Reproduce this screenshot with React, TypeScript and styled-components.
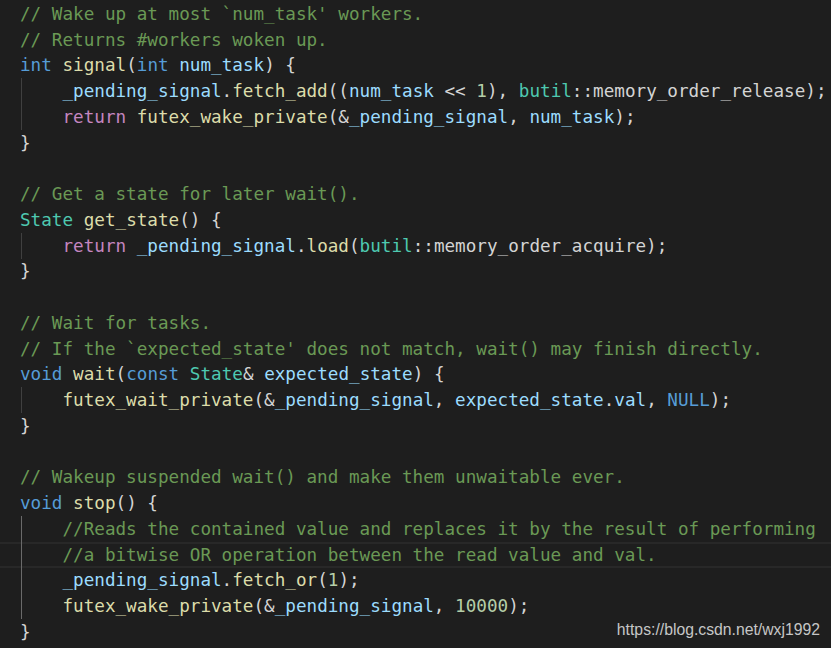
import React from "react";
import styled, { createGlobalStyle } from "styled-components";

const GlobalStyle = createGlobalStyle`
  html, body { margin: 0; padding: 0; background: #1e1e1e; }
`;

type Kind = "c" | "k" | "x" | "f" | "v" | "t" | "n" | "p";

const colors: Record<Kind, string> = {
  c: "#6a9955",
  k: "#569cd6",
  x: "#c586c0",
  f: "#dcdcaa",
  v: "#9cdcfe",
  t: "#4ec9b0",
  n: "#b5cea8",
  p: "#d4d4d4",
};

type Tok = [Kind, string];
type LineDef = { indent: 0 | 1; guide?: "normal" | "active"; current?: boolean; toks: Tok[] };

const lines: LineDef[] = [
  { indent: 0, toks: [["c", "// Wake up at most `num_task' workers."]] },
  { indent: 0, toks: [["c", "// Returns #workers woken up."]] },
  { indent: 0, toks: [["k", "int"], ["p", " "], ["f", "signal"], ["p", "("], ["k", "int"], ["p", " "], ["v", "num_task"], ["p", ") {"]] },
  { indent: 1, guide: "normal", toks: [["v", "_pending_signal"], ["p", "."], ["f", "fetch_add"], ["p", "(("], ["v", "num_task"], ["p", " << "], ["n", "1"], ["p", "), "], ["t", "butil"], ["p", "::memory_order_release);"]] },
  { indent: 1, guide: "normal", toks: [["x", "return"], ["p", " "], ["f", "futex_wake_private"], ["p", "(&"], ["v", "_pending_signal"], ["p", ", "], ["v", "num_task"], ["p", ");"]] },
  { indent: 0, toks: [["p", "}"]] },
  { indent: 0, toks: [] },
  { indent: 0, toks: [["c", "// Get a state for later wait()."]] },
  { indent: 0, toks: [["t", "State"], ["p", " "], ["f", "get_state"], ["p", "() {"]] },
  { indent: 1, guide: "normal", toks: [["x", "return"], ["p", " "], ["v", "_pending_signal"], ["p", "."], ["f", "load"], ["p", "("], ["t", "butil"], ["p", "::memory_order_acquire);"]] },
  { indent: 0, toks: [["p", "}"]] },
  { indent: 0, toks: [] },
  { indent: 0, toks: [["c", "// Wait for tasks."]] },
  { indent: 0, toks: [["c", "// If the `expected_state' does not match, wait() may finish directly."]] },
  { indent: 0, toks: [["k", "void"], ["p", " "], ["f", "wait"], ["p", "("], ["k", "const"], ["p", " "], ["t", "State"], ["p", "& "], ["v", "expected_state"], ["p", ") {"]] },
  { indent: 1, guide: "normal", toks: [["f", "futex_wait_private"], ["p", "(&"], ["v", "_pending_signal"], ["p", ", "], ["v", "expected_state"], ["p", "."], ["v", "val"], ["p", ", "], ["k", "NULL"], ["p", ");"]] },
  { indent: 0, toks: [["p", "}"]] },
  { indent: 0, toks: [] },
  { indent: 0, toks: [["c", "// Wakeup suspended wait() and make them unwaitable ever."]] },
  { indent: 0, toks: [["k", "void"], ["p", " "], ["f", "stop"], ["p", "() {"]] },
  { indent: 1, guide: "active", toks: [["c", "//Reads the contained value and replaces it by the result of performing"]] },
  { indent: 1, guide: "active", current: true, toks: [["c", "//a bitwise OR operation between the read value and val."]] },
  { indent: 1, guide: "active", toks: [["v", "_pending_signal"], ["p", "."], ["f", "fetch_or"], ["p", "("], ["n", "1"], ["p", ");"]] },
  { indent: 1, guide: "active", toks: [["f", "futex_wake_private"], ["p", "(&"], ["v", "_pending_signal"], ["p", ", "], ["n", "10000"], ["p", ");"]] },
  { indent: 0, toks: [["p", "}"]] },
];

const Editor = styled.div`
  position: relative;
  width: 831px;
  height: 648px;
  overflow: hidden;
  background: #1e1e1e;
  padding-top: 1px;
  box-sizing: border-box;
  font-family: "DejaVu Sans Mono", "Liberation Mono", monospace;
  font-size: 17.64px;
  color: #d4d4d4;
`;

const Line = styled.div<{ $current?: boolean }>`
  display: flex;
  align-items: center;
  height: 25.75px;
  padding-left: 20px;
  white-space: pre;
  box-shadow: ${(p) => (p.$current ? "inset 0 2px 0 #282828, inset 0 -2px 0 #282828" : "none")};
`;

const Indent = styled.span<{ $guide?: "normal" | "active" }>`
  display: inline-block;
  align-self: stretch;
  width: 4ch;
  flex: none;
  box-shadow: inset 1px 0 0
    ${(p) => (p.$guide === "active" ? "#6a6a6a" : "#404040")};
  margin-left: 1px;
  margin-right: -1px;
`;

const Token = styled.span<{ $kind: Kind }>`
  color: ${(p) => colors[p.$kind]};
`;

const Watermark = styled.div`
  position: absolute;
  right: 11px;
  bottom: 9px;
  font-family: "Liberation Sans", Arial, sans-serif;
  font-size: 15.75px;
  color: #c6c6c6;
  white-space: nowrap;
`;

export default function App() {
  return (
    <>
      <GlobalStyle />
      <Editor>
        {lines.map((l, i) => (
          <Line key={i} $current={l.current}>
            {l.indent ? <Indent $guide={l.guide} /> : null}
            {l.toks.map((t, j) => (
              <Token key={j} $kind={t[0]}>
                {t[1]}
              </Token>
            ))}
          </Line>
        ))}
        <Watermark>https://blog.csdn.net/wxj1992</Watermark>
      </Editor>
    </>
  );
}
